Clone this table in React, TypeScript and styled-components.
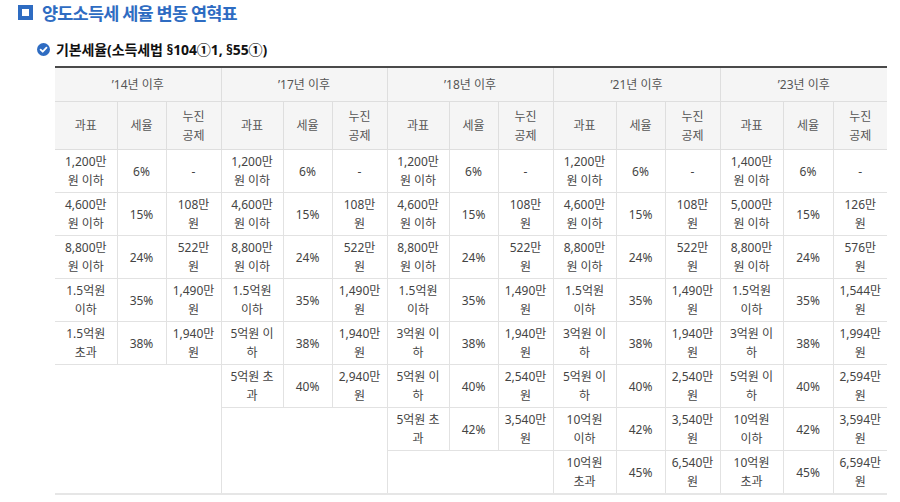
import React from "react";
import styled, { createGlobalStyle } from "styled-components";

const GlobalStyle = createGlobalStyle`
  html, body {
    margin: 0;
    padding: 0;
    background: #fff;
  }
  body {
    font-family: "Noto Sans", "Noto Sans CJK KR", sans-serif;
    color: #333;
  }
`;

const Page = styled.div`
  width: 900px;
  height: 502px;
  overflow: hidden;
  padding-left: 18px;
  box-sizing: border-box;
`;

const Title = styled.h1`
  display: flex;
  align-items: center;
  gap: 9px;
  height: 24px;
  margin: 0;
  font-size: 17.5px;
  font-weight: 700;
  color: #2e6cc2;
  letter-spacing: -0.8px;
`;

const SquareMark = styled.span`
  width: 15px;
  height: 15px;
  box-sizing: border-box;
  border: 4.5px solid #2e6cc2;
  background: #fff;
  flex: none;
`;

const SubTitle = styled.h2`
  display: flex;
  align-items: center;
  gap: 6px;
  height: 22px;
  margin: 14px 0 0 19px;
  font-size: 14px;
  font-weight: 700;
  color: #111;
  letter-spacing: -0.1px;
`;

const TableWrap = styled.div`
  margin: 6px 0 0 37px;
`;

const Table = styled.table`
  width: 832px;
  table-layout: fixed;
  border-collapse: collapse;
  font-size: 12px;
  line-height: 19px;
  text-align: center;
  border-top: 2px solid #4a4a4a;
  border-bottom: 2px solid #e6e6e6;
`;

const HeadCell = styled.th<{ $tall?: boolean }>`
  height: ${(p) => (p.$tall ? "47px" : "33px")};
  padding: 0 4px;
  background: #f5f5f5;
  color: #555;
  font-weight: 400;
  border: 1px solid #dedede;
  border-top: none;
  white-space: pre-line;
  &:first-child { border-left: none; }
  &:last-child { border-right: none; }
`;

const Cell = styled.td`
  height: 42px;
  padding: 0 3px;
  color: #444;
  border: 1px solid #e2e2e2;
  white-space: pre-line;
  vertical-align: middle;
  &:first-child { border-left: none; }
  &:last-child { border-right: none; }
`;

const EmptyCell = styled(Cell)`
  background: #fff;
`;

type Bracket = [string, string, string];

const groups: { label: string; rows: Bracket[] }[] = [
  {
    label: "’14년 이후",
    rows: [
      ["1,200만\n원 이하", "6%", "-"],
      ["4,600만\n원 이하", "15%", "108만\n원"],
      ["8,800만\n원 이하", "24%", "522만\n원"],
      ["1.5억원\n이하", "35%", "1,490만\n원"],
      ["1.5억원\n초과", "38%", "1,940만\n원"],
    ],
  },
  {
    label: "’17년 이후",
    rows: [
      ["1,200만\n원 이하", "6%", "-"],
      ["4,600만\n원 이하", "15%", "108만\n원"],
      ["8,800만\n원 이하", "24%", "522만\n원"],
      ["1.5억원\n이하", "35%", "1,490만\n원"],
      ["5억원 이\n하", "38%", "1,940만\n원"],
      ["5억원 초\n과", "40%", "2,940만\n원"],
    ],
  },
  {
    label: "’18년 이후",
    rows: [
      ["1,200만\n원 이하", "6%", "-"],
      ["4,600만\n원 이하", "15%", "108만\n원"],
      ["8,800만\n원 이하", "24%", "522만\n원"],
      ["1.5억원\n이하", "35%", "1,490만\n원"],
      ["3억원 이\n하", "38%", "1,940만\n원"],
      ["5억원 이\n하", "40%", "2,540만\n원"],
      ["5억원 초\n과", "42%", "3,540만\n원"],
    ],
  },
  {
    label: "’21년 이후",
    rows: [
      ["1,200만\n원 이하", "6%", "-"],
      ["4,600만\n원 이하", "15%", "108만\n원"],
      ["8,800만\n원 이하", "24%", "522만\n원"],
      ["1.5억원\n이하", "35%", "1,490만\n원"],
      ["3억원 이\n하", "38%", "1,940만\n원"],
      ["5억원 이\n하", "40%", "2,540만\n원"],
      ["10억원\n이하", "42%", "3,540만\n원"],
      ["10억원\n초과", "45%", "6,540만\n원"],
    ],
  },
  {
    label: "’23년 이후",
    rows: [
      ["1,400만\n원 이하", "6%", "-"],
      ["5,000만\n원 이하", "15%", "126만\n원"],
      ["8,800만\n원 이하", "24%", "576만\n원"],
      ["1.5억원\n이하", "35%", "1,544만\n원"],
      ["3억원 이\n하", "38%", "1,994만\n원"],
      ["5억원 이\n하", "40%", "2,594만\n원"],
      ["10억원\n이하", "42%", "3,594만\n원"],
      ["10억원\n초과", "45%", "6,594만\n원"],
    ],
  },
];

const ROWS = 8;
const colWidths = [62, 49, 55, 62, 49, 55, 62, 49, 55, 63, 49, 55, 63, 50, 54];

function CheckIcon() {
  return (
    <svg width="13" height="13" viewBox="0 0 13 13">
      <circle cx="6.5" cy="6.5" r="6.5" fill="#2e6cc2" />
      <path
        d="M3.6 6.7 L5.7 8.7 L9.5 4.6"
        fill="none"
        stroke="#fff"
        strokeWidth="1.8"
        strokeLinecap="round"
        strokeLinejoin="round"
      />
    </svg>
  );
}

function App() {
  const bodyRows = [];
  for (let r = 0; r < ROWS; r++) {
    const cells: React.ReactNode[] = [];
    groups.forEach((g, gi) => {
      const b = g.rows[r];
      if (b) {
        b.forEach((v, ci) => cells.push(<Cell key={`${gi}-${ci}`}>{v}</Cell>));
      } else if (r === g.rows.length) {
        cells.push(
          <EmptyCell key={`${gi}-e`} colSpan={3} rowSpan={ROWS - g.rows.length} />
        );
      }
    });
    bodyRows.push(<tr key={r}>{cells}</tr>);
  }

  return (
    <Page>
      <GlobalStyle />
      <Title>
        <SquareMark />
        양도소득세 세율 변동 연혁표
      </Title>
      <SubTitle>
        <CheckIcon />
        기본세율(소득세법 §104①1, §55①)
      </SubTitle>
      <TableWrap>
        <Table>
          <colgroup>
            {colWidths.map((w, i) => (
              <col key={i} style={{ width: w }} />
            ))}
          </colgroup>
          <thead>
            <tr>
              {groups.map((g) => (
                <HeadCell key={g.label} colSpan={3}>
                  {g.label}
                </HeadCell>
              ))}
            </tr>
            <tr>
              {groups.map((g) => (
                <React.Fragment key={g.label}>
                  <HeadCell $tall>과표</HeadCell>
                  <HeadCell $tall>세율</HeadCell>
                  <HeadCell $tall>{"누진\n공제"}</HeadCell>
                </React.Fragment>
              ))}
            </tr>
          </thead>
          <tbody>{bodyRows}</tbody>
        </Table>
      </TableWrap>
    </Page>
  );
}

export default App;
